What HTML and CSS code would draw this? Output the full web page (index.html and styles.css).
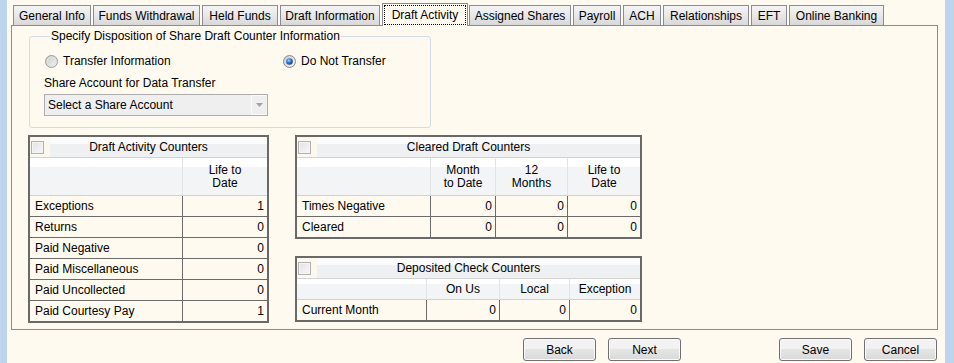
FILE: index.html
```html
<!DOCTYPE html>
<html>
<head>
<meta charset="utf-8">
<link rel="stylesheet" href="styles.css">
</head>
<body>
<div class="window">
  <div class="edge edge-left"></div>
  <div class="main">
    <div class="tabs">
      <div class="tab t-general">General Info</div>
      <div class="tab t-funds">Funds Withdrawal</div>
      <div class="tab t-held">Held Funds</div>
      <div class="tab t-draftinfo">Draft Information</div>
      <div class="tab tab-active t-draftact"><span>Draft Activity</span></div>
      <div class="tab t-assigned">Assigned Shares</div>
      <div class="tab t-payroll">Payroll</div>
      <div class="tab t-ach">ACH</div>
      <div class="tab t-rel">Relationships</div>
      <div class="tab t-eft">EFT</div>
      <div class="tab t-online">Online Banking</div>
    </div>
    <div class="panel">
      <fieldset class="group">
        <legend>Specify Disposition of Share Draft Counter Information</legend>
        <div class="radios">
          <label class="radio radio-first">
            <svg width="13" height="13" viewBox="0 0 13 13"><defs><linearGradient id="rg1" x1="0" y1="0" x2="1" y2="1"><stop offset="0" stop-color="#c9c9c9"/><stop offset="1" stop-color="#f6f6f6"/></linearGradient></defs><circle cx="6.5" cy="6.5" r="6" fill="url(#rg1)" stroke="#9a9a9a"/><circle cx="6.5" cy="6.5" r="4.2" fill="none" stroke="#e4e4e4"/></svg>
            Transfer Information
          </label>
          <label class="radio">
            <svg width="13" height="13" viewBox="0 0 13 13"><defs><linearGradient id="rg2" x1="0" y1="0" x2="1" y2="1"><stop offset="0" stop-color="#c9c9c9"/><stop offset="1" stop-color="#f6f6f6"/></linearGradient><radialGradient id="rd" cx="0.4" cy="0.35" r="0.7"><stop offset="0" stop-color="#9fd0ff"/><stop offset="0.5" stop-color="#2a74c8"/><stop offset="1" stop-color="#0d3f86"/></radialGradient></defs><circle cx="6.5" cy="6.5" r="6" fill="url(#rg2)" stroke="#8a8a8a"/><circle cx="6.5" cy="6.5" r="3.3" fill="url(#rd)"/></svg>
            Do Not Transfer
          </label>
        </div>
        <div class="field-label">Share Account for Data Transfer</div>
        <div class="select">
          <span class="select-text">Select a Share Account</span>
          <span class="select-btn"><svg width="7" height="4" viewBox="0 0 7 4"><path d="M0 0H7L3.5 4Z" fill="#a3a3a3"/></svg></span>
        </div>
      </fieldset>

      <div class="counters">
        <div class="box box-draft">
          <div class="box-title"><span class="chk-cell"><span class="chk"></span></span><span class="title">Draft Activity Counters</span><span></span></div>
          <table class="grid">
            <colgroup><col class="c-d1"><col class="c-d2"></colgroup>
            <tr><th></th><th>Life to<br>Date</th></tr>
            <tr><td>Exceptions</td><td class="num">1</td></tr>
            <tr><td>Returns</td><td class="num">0</td></tr>
            <tr><td>Paid Negative</td><td class="num">0</td></tr>
            <tr><td>Paid Miscellaneous</td><td class="num">0</td></tr>
            <tr><td>Paid Uncollected</td><td class="num">0</td></tr>
            <tr><td>Paid Courtesy Pay</td><td class="num">1</td></tr>
          </table>
        </div>
        <div class="col-right">
          <div class="box">
            <div class="box-title"><span class="chk-cell"><span class="chk"></span></span><span class="title">Cleared Draft Counters</span><span></span></div>
            <table class="grid">
              <colgroup><col class="c-c1"><col class="c-c2"><col class="c-c3"><col class="c-c4"></colgroup>
              <tr><th></th><th>Month<br>to Date</th><th>12<br>Months</th><th>Life to<br>Date</th></tr>
              <tr><td>Times Negative</td><td class="num">0</td><td class="num">0</td><td class="num">0</td></tr>
              <tr><td>Cleared</td><td class="num">0</td><td class="num">0</td><td class="num">0</td></tr>
            </table>
          </div>
          <div class="box">
            <div class="box-title"><span class="chk-cell"><span class="chk"></span></span><span class="title">Deposited Check Counters</span><span></span></div>
            <table class="grid grid-short">
              <colgroup><col class="c-p1"><col class="c-p2"><col class="c-p3"><col class="c-p4"></colgroup>
              <tr><th></th><th>On Us</th><th>Local</th><th>Exception</th></tr>
              <tr><td>Current Month</td><td class="num">0</td><td class="num">0</td><td class="num">0</td></tr>
            </table>
          </div>
        </div>
      </div>
    </div>
    <div class="buttons">
      <button class="btn">Back</button>
      <button class="btn">Next</button>
      <button class="btn btn-save">Save</button>
      <button class="btn">Cancel</button>
    </div>
  </div>
  <div class="edge edge-right"></div>
</div>
</body>
</html>
```
FILE: styles.css
```css
html, body {
  margin: 0;
  padding: 0;
  background: #fffaf0;
  font-family: "Liberation Sans", Arial, sans-serif;
  font-size: 12px;
  color: #000;
}

.window {
  display: flex;
  width: 954px;
  height: 363px;
  overflow: hidden;
}

.edge {
  background: #bcd4ec;
}
.edge-left { width: 7px; }
.edge-right { width: 9px; }

.main {
  flex: 1;
  padding: 3px 0 0 4px;
}

/* Tabs */
.tabs {
  display: flex;
  align-items: flex-end;
  height: 22px;
  padding-left: 2px;
}
.tab {
  box-sizing: border-box;
  height: 20px;
  border: 1px solid #898c95;
  border-bottom: none;
  background: linear-gradient(#f4f4f4, #e8e8e8 50%, #d8d8d8);
  text-align: center;
  line-height: 20px;
  white-space: nowrap;
  margin-right: 2px;
}
.tab-active {
  height: 23px;
  margin-bottom: -1px;
  background: #fffaf0;
  position: relative;
  z-index: 1;
  padding: 0 1px;
  line-height: 19px;
}
.tab-active span {
  display: block;
  margin-top: 1px;
  height: 20px;
  box-sizing: border-box;
  border: 1px dotted #000;
}
.t-general { width: 78px; }
.t-funds { width: 107px; }
.t-held { width: 76px; }
.t-draftinfo { width: 100px; }
.t-draftact { width: 86px; margin-right: 1px; }
.t-assigned { width: 102px; }
.t-payroll { width: 48px; }
.t-ach { width: 38px; }
.t-rel { width: 86px; }
.t-eft { width: 36px; }
.t-online { width: 95px; }

/* Panel */
.panel {
  box-sizing: border-box;
  width: 927px;
  height: 305px;
  border: 1px solid #898c95;
}

.group {
  box-sizing: border-box;
  width: 402px;
  margin: 3px 0 0 17px;
  padding: 0 0 11px 14px;
  border: 1px solid #d3dce3;
  border-radius: 3px;
  min-width: 0;
}
.group legend {
  padding: 0 1px;
  margin-left: 6px;
  line-height: 14px;
}

.radios {
  display: flex;
  align-items: center;
  height: 16px;
  margin-top: 10px;
}
.radio {
  display: flex;
  align-items: center;
  gap: 5px;
}
.radio-first {
  width: 239px;
  box-sizing: border-box;
  padding-left: 1px;
}

.field-label {
  line-height: 14px;
  margin-top: 7px;
}

.select {
  box-sizing: border-box;
  display: flex;
  width: 224px;
  height: 22px;
  margin-top: 4px;
  border: 1px solid #adadad;
  background: #efefef;
}
.select-text {
  flex: 1;
  padding-left: 3px;
  line-height: 20px;
}
.select-btn {
  box-sizing: border-box;
  width: 16px;
  border: 1px solid #fbfbfb;
  border-right-color: #f4f4f4;
  display: flex;
  align-items: center;
  justify-content: center;
}

/* Counter boxes */
.counters {
  display: flex;
  align-items: flex-start;
  gap: 26px;
  margin: 7px 0 0 16px;
}
.col-right {
  display: flex;
  flex-direction: column;
  gap: 17px;
  width: 347px;
}
.box-draft { width: 241px; }

.box {
  box-sizing: border-box;
  border: 2px solid #696969;
  background: #fffaf0;
}
.box-title {
  display: grid;
  grid-template-columns: 20px 1fr 20px;
  height: 20px;
  border-bottom: 1px solid #d3d3d3;
  background: linear-gradient(#fbfbfc 0 35%, #eef0f2 35%);
}
.chk-cell {
  background: #fcf8ee;
  display: flex;
  align-items: center;
  padding-left: 1px;
}
.chk {
  box-sizing: border-box;
  width: 13px;
  height: 13px;
  border: 1px solid #b1b1b1;
  background: linear-gradient(135deg, #e3e3e3, #f7f7f7);
  box-shadow: inset 0 0 0 1px #f4f4f4;
}
.box-title .title {
  text-align: center;
  line-height: 20px;
}

.grid {
  width: 100%;
  border-collapse: separate;
  border-spacing: 0;
  table-layout: fixed;
}
.grid th {
  box-sizing: border-box;
  height: 38px;
  padding: 0;
  font-weight: normal;
  line-height: 13px;
  text-align: center;
  background: linear-gradient(#ffffff 0 25%, #f3f4f6 25%);
  border-right: 1px solid #e2e3e5;
  border-bottom: 1px solid #d0d0d0;
}
.grid-short th {
  height: 21px;
}
.grid td {
  box-sizing: border-box;
  height: 21px;
  padding: 0 3px 0 5px;
  line-height: 14px;
  white-space: nowrap;
  border-right: 1px solid #6b6b6b;
  border-bottom: 1px solid #6b6b6b;
}
.grid th:last-child,
.grid td:last-child {
  border-right: none;
}
.grid tr:last-child td {
  border-bottom: none;
  height: 20px;
}
.grid td.num {
  text-align: right;
}

.c-d1 { width: 153px; }
.c-d2 { width: 84px; }
.c-c1 { width: 134px; }
.c-c2 { width: 65px; }
.c-c3 { width: 72px; }
.c-c4 { width: 72px; }
.c-p1 { width: 130px; }
.c-p2 { width: 73px; }
.c-p3 { width: 70px; }
.c-p4 { width: 70px; }

/* Buttons */
.buttons {
  display: flex;
  justify-content: flex-end;
  width: 927px;
  box-sizing: border-box;
  padding-right: 1px;
  margin-top: 8px;
  gap: 12px;
}
.btn {
  box-sizing: border-box;
  width: 73px;
  height: 23px;
  padding: 0;
  border: 1px solid #707070;
  border-radius: 3px;
  background: linear-gradient(#f2f2f2 0 45%, #e5e5e5 50%, #d9d9d9);
  font-family: "Liberation Sans", Arial, sans-serif;
  font-size: 12px;
  color: #000;
  box-shadow: inset 0 0 0 1px #fafafa;
}
.btn-save {
  margin-left: 86px;
}
```
